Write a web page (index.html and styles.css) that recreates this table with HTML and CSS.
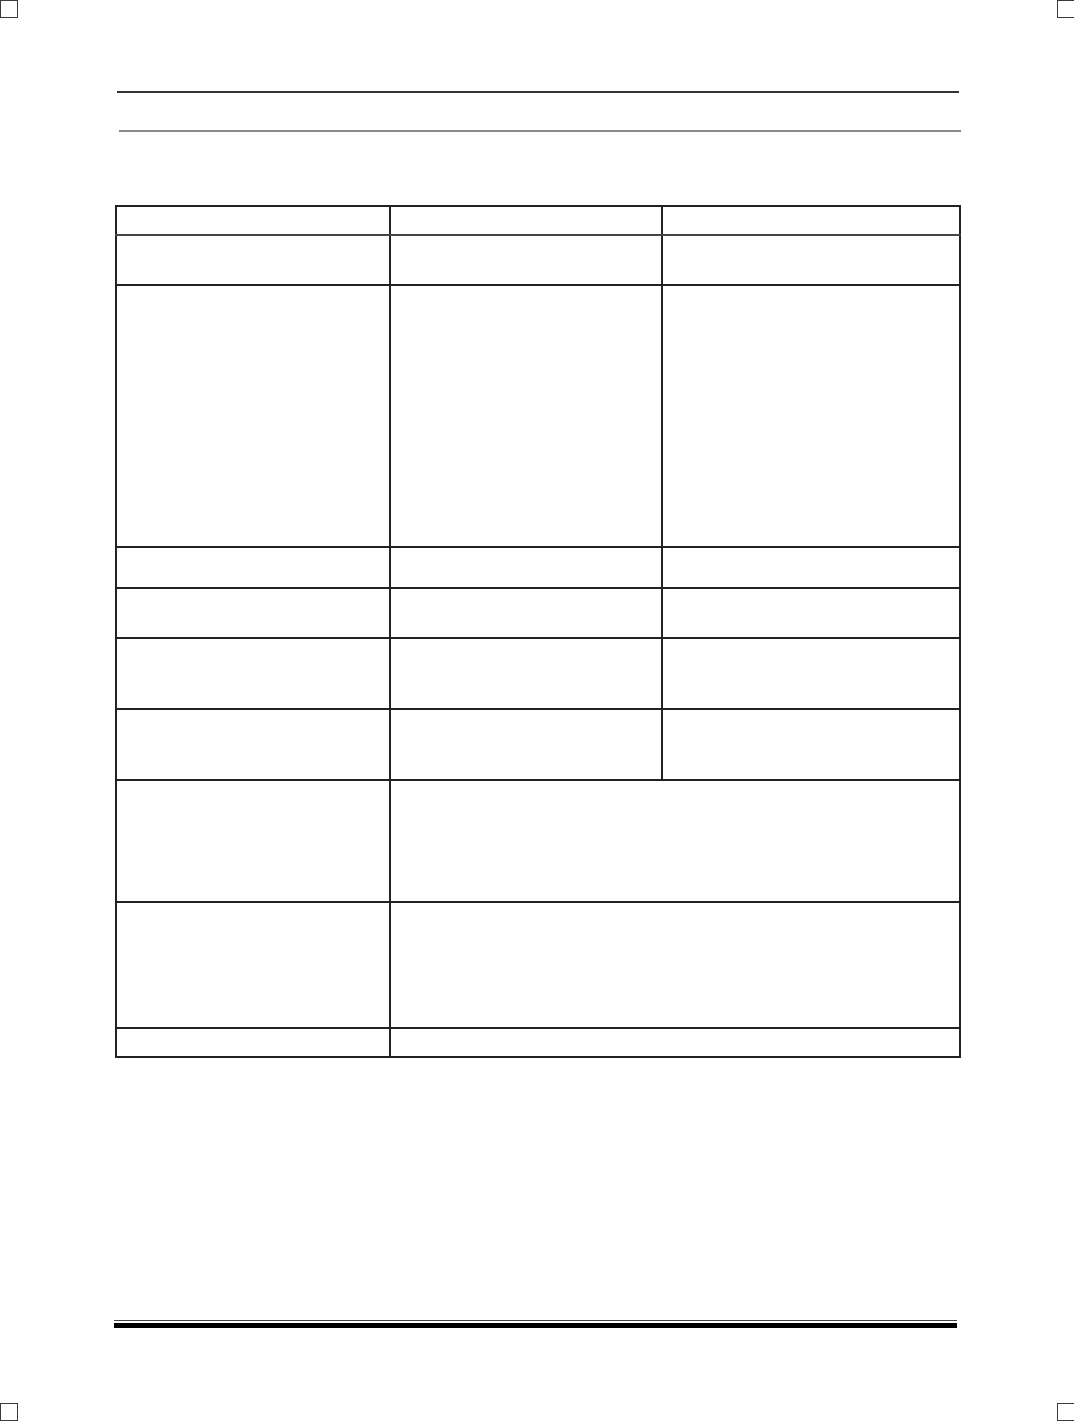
FILE: index.html
```html
<!DOCTYPE html>
<html>
<head>
<meta charset="utf-8">
<link rel="stylesheet" href="styles.css">
</head>
<body>
<div class="page">
  <span class="crop crop-tl"></span>
  <span class="crop crop-tr"></span>
  <span class="crop crop-bl"></span>
  <span class="crop crop-br"></span>

  <div class="rule rule-top"></div>
  <div class="rule rule-second"></div>

  <table class="grid">
    <colgroup>
      <col class="c1"><col class="c2"><col class="c3">
    </colgroup>
    <tr class="h29 head"><td></td><td></td><td></td></tr>
    <tr class="h50"><td></td><td></td><td></td></tr>
    <tr class="h262"><td></td><td></td><td></td></tr>
    <tr class="h41"><td></td><td></td><td></td></tr>
    <tr class="h50"><td></td><td></td><td></td></tr>
    <tr class="h71"><td></td><td></td><td></td></tr>
    <tr class="h71"><td></td><td></td><td></td></tr>
    <tr class="h122"><td></td><td colspan="2"></td></tr>
    <tr class="h126"><td></td><td colspan="2"></td></tr>
    <tr class="h29"><td></td><td colspan="2"></td></tr>
  </table>

  <div class="footer">
    <div class="foot-thin"></div>
    <div class="foot-thick"></div>
  </div>
</div>
</body>
</html>
```

FILE: styles.css
```css
html, body {
  margin: 0;
  padding: 0;
  background: #ffffff;
  font-family: "Liberation Sans", Arial, sans-serif;
}

.page {
  position: relative;
  width: 1074px;
  height: 1421px;
  overflow: hidden;
  display: flow-root;
}

.crop {
  position: absolute;
  width: 16px;
  height: 16px;
  border: 1px solid #3a3a3a;
  box-sizing: content-box;
}
.crop-tl { left: 0; top: 0; }
.crop-tr { left: 1057px; top: 0; }
.crop-bl { left: 0; top: 1403px; }
.crop-br { left: 1057px; top: 1403px; }

.rule {
  height: 2px;
  width: 842px;
}
.rule-top {
  margin: 91px 0 0 117px;
  background: #333333;
}
.rule-second {
  margin: 37px 0 0 119px;
  background: #8a8a8a;
}

.grid {
  margin: 73px 0 0 115px;
  width: 844px;
  border-collapse: collapse;
  table-layout: fixed;
  border: 2px solid #222222;
}
.grid .c1 { width: 274px; }
.grid .c2 { width: 272px; }
.grid .c3 { width: 298px; }

.grid td {
  border: 2px solid #222222;
  padding: 0;
}
.grid .head td {
  border-bottom-color: #444444;
}

.h29 td { height: 27px; }
.h41 td { height: 39px; }
.h50 td { height: 48px; }
.h71 td { height: 69px; }
.h122 td { height: 120px; }
.h126 td { height: 124px; }
.h262 td { height: 260px; }

.footer {
  margin: 262px 0 0 114px;
  width: 843px;
}
.foot-thin {
  height: 1px;
  background: #444444;
}
.foot-thick {
  margin-top: 2px;
  height: 5px;
  background: #000000;
}
```
